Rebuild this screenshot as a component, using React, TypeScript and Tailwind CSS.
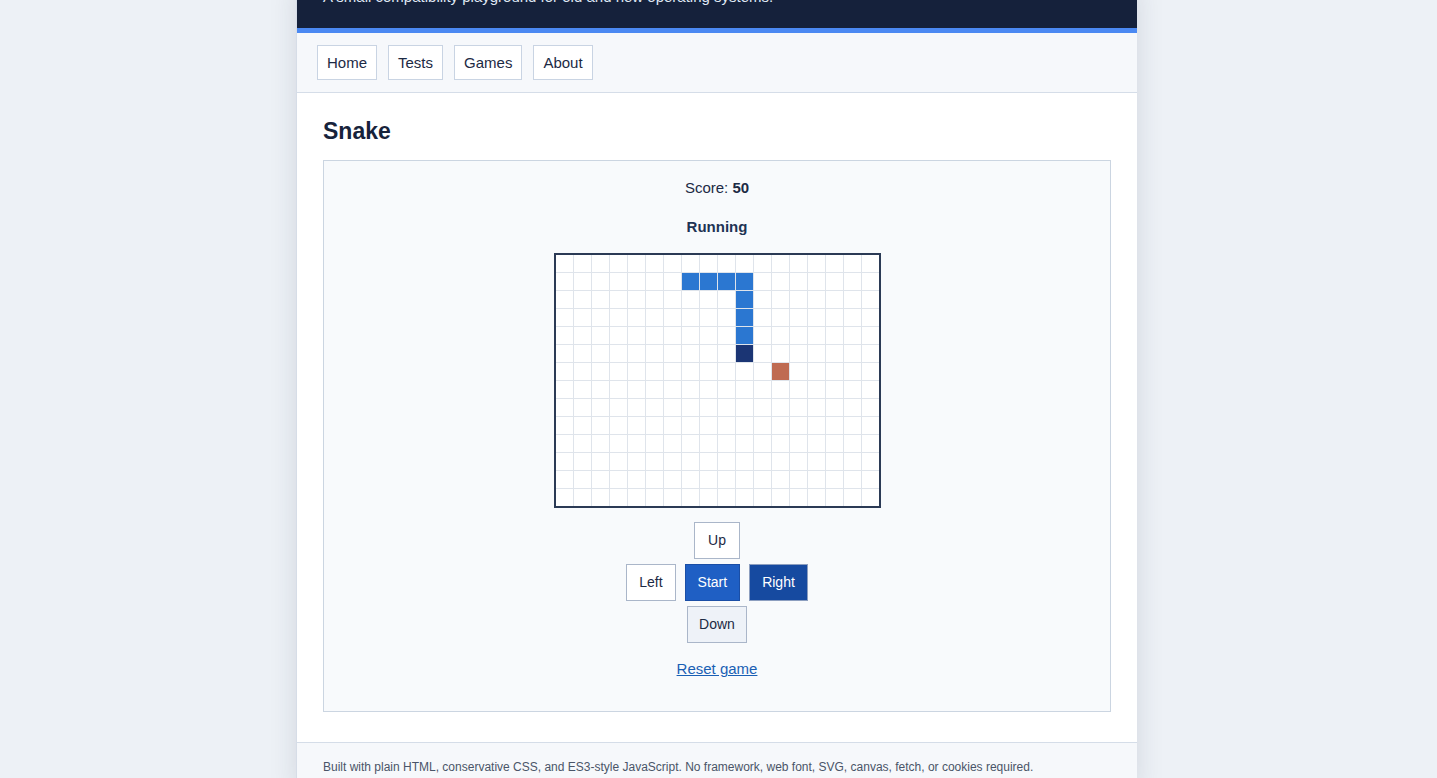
const COLS = 18;
const ROWS = 14;

// snake body from tail to head, as [row, col]
const snake: [number, number][] = [
  [1, 7],
  [1, 8],
  [1, 9],
  [1, 10],
  [2, 10],
  [3, 10],
  [4, 10],
  [5, 10],
];
const food: [number, number] = [6, 12];

function cellClass(r: number, c: number) {
  const head = snake[snake.length - 1];
  if (head[0] === r && head[1] === c) return 'bg-[#1b3574]';
  if (snake.some(([sr, sc]) => sr === r && sc === c)) return 'bg-[#2b77d1]';
  if (food[0] === r && food[1] === c) return 'bg-[#bf6b52]';
  return 'bg-white';
}

const navItems = ['Home', 'Tests', 'Games', 'About'];

export default function App() {
  const cells = [];
  for (let r = 0; r < ROWS; r++) {
    for (let c = 0; c < COLS; c++) {
      cells.push(<div key={`${r}-${c}`} className={`w-[17px] h-[17px] ${cellClass(r, c)}`} />);
    }
  }

  return (
    <div
      className="min-h-screen bg-[#edf1f6] text-[#1c2a44] pr-1"
      style={{ fontFamily: '"Liberation Sans", Arial, sans-serif' }}
    >
      <div className="mx-auto w-[841px] bg-white border-l border-[#d6dde7] shadow-[0_0_26px_rgba(30,45,70,0.13)]">
        {/* page header */}
        <header className="bg-[#15213b] px-[26px] pb-[21px] border-b-[5px] border-[#4b89f2]">
          <p className="-mt-[13px] text-[15px] leading-5 text-[#dfe7f3]">
            A small compatibility playground for old and new operating systems.
          </p>
        </header>

        {/* nav */}
        <nav className="bg-[#f6f8fb] border-b border-[#d5dde8] px-5 pt-3 pb-3 flex gap-[11px]">
          {navItems.map((item) => (
            <a
              key={item}
              href="#"
              className="block bg-white border border-[#c9d4e3] px-[9px] py-[6px] text-[15px] leading-[21px] text-[#1c2a44]"
            >
              {item}
            </a>
          ))}
        </nav>

        <main className="px-[26px] pt-[25px] pb-[30px]">
          <h1 className="text-[23px] leading-[27px] font-bold text-[#17233b] mb-[15px]">Snake</h1>

          <div className="bg-[#f8fafc] border border-[#cbd5e1] pt-[16px] pb-[32px] flex flex-col items-center">
            <p className="text-[15px] leading-[22px]">
              Score: <b>50</b>
            </p>
            <p className="mt-[17px] text-[15px] leading-[22px] font-bold text-[#1e3354]">Running</p>

            <div
              className="mt-[15px] border-2 border-[#2b3a55] bg-[#dfe4eb] grid gap-px"
              style={{ gridTemplateColumns: `repeat(${COLS}, 17px)` }}
            >
              {cells}
            </div>

            {/* controls */}
            <div className="mt-[14px] flex flex-col items-center gap-[5px] text-[14px]">
              <button className="h-[37px] px-[13px] bg-white border border-[#aab6c9] text-[#1c2a44]">Up</button>
              <div className="flex gap-[9px]">
                <button className="h-[37px] px-[12px] bg-white border border-[#aab6c9] text-[#1c2a44]">Left</button>
                <button className="h-[37px] px-[12px] bg-[#1f5fc4] border border-[#1a4ea6] text-white">Start</button>
                <button className="h-[37px] px-[12px] bg-[#164aa0] border border-[#8c9ebf] text-white">Right</button>
              </div>
              <button className="h-[37px] px-[11px] bg-[#eef2f8] border border-[#aab6c9] text-[#1c2a44]">Down</button>
            </div>

            <a href="#" className="mt-[16px] text-[15px] leading-5 text-[#1a5fb4] underline">
              Reset game
            </a>
          </div>
        </main>

        <footer className="bg-[#f6f8fb] border-t border-[#d5dde8] px-[26px] pt-[15px] pb-4 text-[12px] leading-[18px] text-[#4a5568]">
          Built with plain HTML, conservative CSS, and ES3-style JavaScript. No framework, web font, SVG, canvas, fetch, or cookies required.
        </footer>
      </div>
    </div>
  );
}
